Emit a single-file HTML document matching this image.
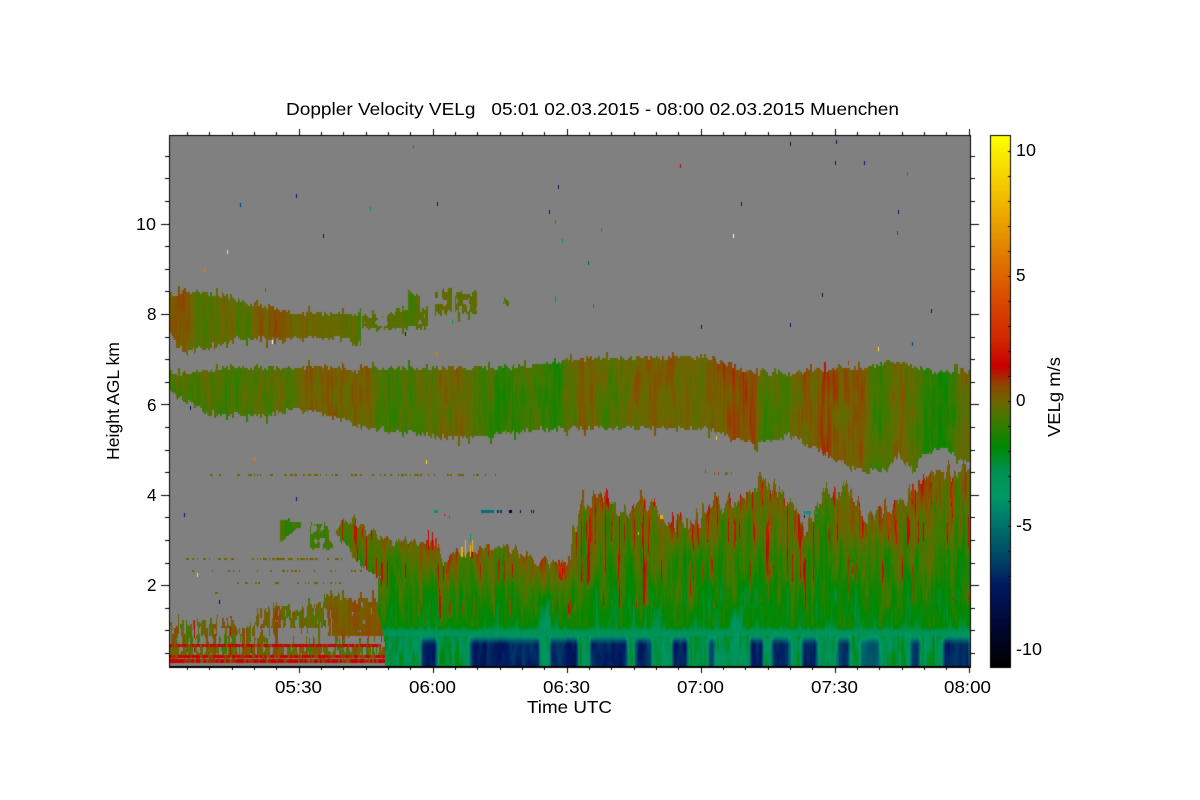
<!DOCTYPE html>
<html>
<head>
<meta charset="utf-8">
<title>Doppler Velocity VELg</title>
<style>
html,body{margin:0;padding:0;background:#fff;width:1200px;height:800px;overflow:hidden}
#c{position:absolute;left:0;top:0}
#t{position:absolute;left:0;top:0}
text{font-family:"Liberation Sans",sans-serif;font-size:17.5px;fill:#000;white-space:pre}
</style>
</head>
<body>
<canvas id="c" width="1200" height="800"></canvas>
<svg id="t" width="1200" height="800" xmlns="http://www.w3.org/2000/svg">
<text x="286" y="115" textLength="613" lengthAdjust="spacingAndGlyphs" xml:space="preserve">Doppler Velocity VELg   05:01 02.03.2015 - 08:00 02.03.2015 Muenchen</text>
<text x="136" y="230" textLength="20" lengthAdjust="spacingAndGlyphs">10</text>
<text x="147" y="320" textLength="9.5" lengthAdjust="spacingAndGlyphs">8</text>
<text x="147" y="411" textLength="9.5" lengthAdjust="spacingAndGlyphs">6</text>
<text x="147" y="501" textLength="9.5" lengthAdjust="spacingAndGlyphs">4</text>
<text x="147" y="591" textLength="9.5" lengthAdjust="spacingAndGlyphs">2</text>
<text x="275" y="693" textLength="47" lengthAdjust="spacingAndGlyphs">05:30</text>
<text x="409" y="693" textLength="47" lengthAdjust="spacingAndGlyphs">06:00</text>
<text x="543" y="693" textLength="47" lengthAdjust="spacingAndGlyphs">06:30</text>
<text x="677" y="693" textLength="47" lengthAdjust="spacingAndGlyphs">07:00</text>
<text x="811" y="693" textLength="47" lengthAdjust="spacingAndGlyphs">07:30</text>
<text x="944" y="693" textLength="47" lengthAdjust="spacingAndGlyphs">08:00</text>
<text x="527" y="713" textLength="85" lengthAdjust="spacingAndGlyphs">Time UTC</text>
<text transform="translate(119,460) rotate(-90)" textLength="118" lengthAdjust="spacingAndGlyphs">Height AGL km</text>
<text transform="translate(1060,437) rotate(-90)" textLength="80" lengthAdjust="spacingAndGlyphs">VELg m/s</text>
<text x="1016" y="156" textLength="20" lengthAdjust="spacingAndGlyphs">10</text>
<text x="1016" y="281" textLength="9.5" lengthAdjust="spacingAndGlyphs">5</text>
<text x="1016" y="406" textLength="9.5" lengthAdjust="spacingAndGlyphs">0</text>
<text x="1016" y="531" textLength="16" lengthAdjust="spacingAndGlyphs">-5</text>
<text x="1016" y="655" textLength="26" lengthAdjust="spacingAndGlyphs">-10</text>
</svg>
<script>
(function(){
var cv=document.getElementById('c'),g=cv.getContext('2d');
g.fillStyle='#fff';g.fillRect(0,0,1200,800);

// colour table: value -> rgb
var S=[[10.64,255,255,0],[8,240,184,0],[6,224,128,0],[4,216,72,0],[2.5,208,40,0],[1.4,200,0,0],[0.6,138,74,0],[0,110,102,0],[-0.8,60,122,0],[-1.8,0,136,0],[-2.8,0,144,80],[-3.8,0,153,102],[-5,0,112,106],[-6.4,0,64,102],[-7.4,0,24,96],[-8.8,0,8,56],[-10.64,0,0,0]];
function col(v){
  if(v>=S[0][0])return S[0];
  for(var i=1;i<S.length;i++){
    if(v>=S[i][0]){
      var a=S[i-1],b=S[i],t=(v-b[0])/(a[0]-b[0]);
      return [0,b[1]+(a[1]-b[1])*t,b[2]+(a[2]-b[2])*t,b[3]+(a[3]-b[3])*t];
    }
  }
  return [0,0,0,0];
}
function L(p,x){
  if(x<=p[0][0])return p[0][1];
  for(var i=1;i<p.length;i++){
    if(x<=p[i][0]){
      var a=p[i-1],b=p[i];
      return a[1]+(b[1]-a[1])*(x-a[0])/(b[0]-a[0]);
    }
  }
  return p[p.length-1][1];
}
function h(i,j){var s=Math.sin(i*127.1+j*311.7)*43758.5453;return s-Math.floor(s);}
function vn(x,y){
  var i=Math.floor(x),j=Math.floor(y),u=x-i,w=y-j;
  u=u*u*(3-2*u);w=w*w*(3-2*w);
  var a=h(i,j),b=h(i+1,j),c=h(i,j+1),d=h(i+1,j+1);
  return 2*(a+(b-a)*u+(c-a)*w+(a-b-c+d)*u*w)-1;
}
var At=[[169,292],[192,293],[218,293],[235,300],[265,305],[285,310],[298,313],[358,313],[360,313]];
var Ab=[[169,333],[178,347],[188,352],[198,348],[218,343],[238,338],[262,338],[282,340],[305,335],[318,338],[338,337],[355,343],[360,342]];
var Av=[[169,0.3],[185,0.2],[200,-0.5],[225,-0.05],[245,-0.6],[265,0.3],[285,0.3],[300,-0.05],[320,-0.05],[345,-0.2],[360,-0.5]];
var Bt=[[169,370],[185,375],[218,368],[252,367],[332,366],[358,370],[365,367],[490,367],[550,363],[573,358],[640,357],[690,357],[720,360],[740,367],[757,373],[787,373],[800,370],[867,367],[893,360],[933,370],[970,370]];
var Bb=[[169,392],[208,412],[265,415],[298,407],[322,413],[365,427],[398,430],[448,437],[490,435],[540,428],[607,427],[707,427],[730,437],[757,442],[790,433],[800,440],[833,457],[863,470],[887,468],[897,453],[910,467],[923,453],[943,447],[970,463]];
var Bv=[[169,-0.6],[230,-0.7],[295,-0.5],[305,0.2],[330,0.2],[350,0],[365,0.2],[380,-0.9],[420,-0.5],[460,-0.15],[500,-1.2],[530,-0.7],[555,-1.3],[570,-0.4],[590,0.25],[610,-0.7],[640,0.05],[660,0.2],[700,-0.3],[730,0.45],[750,0.45],[765,-0.9],[790,-0.3],[810,0.15],[825,0.5],[840,0.1],[860,0.25],[880,-1],[900,0.1],[925,-1.1],[940,-1.5],[970,0]];
var Mt=[[335,533],[350,518],[370,532],[387,540],[403,540],[437,547],[443,563],[457,553],[503,543],[523,553],[550,563],[570,560],[572,527],[583,500],[608,492],[627,510],[647,498],[660,513],[690,527],[710,503],[733,500],[753,487],[762,475],[783,495],[800,520],[807,533],[812,510],[820,490],[837,485],[850,487],[860,507],[863,517],[883,510],[900,503],[913,483],[940,467],[970,470]];
var Wb=[[335,533],[363,567],[380,577],[381,700]];
var Lc=[[169,623],[200,623],[210,620],[233,623],[240,633],[260,610],[277,602],[300,610],[320,603],[330,590],[340,597],[360,600],[377,600]];
var P=[[362,385,316,328],[385,395,312,326],[395,428,308,327],[408,420,293,320],[435,452,290,312],[455,477,292,312],[503,509,299,306]];
var D=[[421,437,.9],[470,540,1],[550,578,1],[590,627,1],[635,652,.85],[672,688,.9],[708,715,.7],[750,763,1],[772,790,.9],[802,817,1],[837,850,.8],[860,880,.6],[910,920,.8],[943,970,.95]];
function dark0(x){for(var i=0;i<D.length;i++)if(x>=D[i][0]&&x<D[i][1])return D[i][2];return 0;}
var darkT=[];
(function(){for(var x=160;x<980;x++){var s=0;for(var k=-2;k<=2;k++)s+=dark0(x+k);darkT[x]=s/5;}})();
function dark(x){return darkT[x]||0;}
function sm(a,b,x){var t=(x-a)/(b-a);t=t<0?0:t>1?1:t;return t*t*(3-2*t);}

// dotted olive rows
var R=[[473,210,495,.35],[557,175,345,.3],[570,190,370,.16],[581,225,345,.18],[592,190,340,.05]];

function val(x,yr){
  var y=yr,xq=Math.floor(x/1.5),xh=Math.floor(x/2);
  var c=h(xq,3)*2-1,jt=(h(xh,11)-.5)*6,jb=(h(xh,13)-.5)*6;
  if(h(xh,17)<.08)jt-=5; if(h(xh,19)<.07)jb+=6;
  // cirrus A
  if(x<=360&&y>=L(At,x)+jt&&y<=L(Ab,x)+jb){
    return L(Av,x)+.4*vn(x/2.5,y/25)+.2*c;
  }
  // small patches
  for(var i=0;i<P.length;i++){
    var q=P[i];
    if(x>=q[0]&&x<q[1]&&y>=q[2]+jt&&y<=q[3]+jb&&vn(x/4,y/7)>-.5)return -0.4+.35*vn(x/2,y/20)+.2*c;
  }
  // band B
  if(y>=L(Bt,x)+jt*.9&&y<=L(Bb,x)+jb){
    var tr=1-(y-L(Bt,x))/40; tr=tr<0?0:tr;
    return L(Bv,x)+.15*tr+.4*vn(x/2,y/30)+.18*c+.3*vn(x/5,y/18);
  }
  var n1=vn(x/4,y/35),n2=vn(x/1.5+50,y/18);
  // small clouds and rows
  if(x>=280&&x<=300&&y>518+jt*.7+Math.abs(x-283)*.2&&y<541+jb*.5-(x-280)*.8&&h(xh,23)>.1)return -.8+.4*c;
  if(x>=310&&x<=332&&y>=525+jt*1.3&&y<=548+jb&&vn(x/3,y/6)>-.3)return -.7+.4*c;
  for(i=0;i<R.length;i++){
    var r=R[i];
    if(y>=r[0]&&y<r[0]+2&&x>=r[1]&&x<=r[2]){
      var pr=r[3]; if(r[0]==557&&x>255&&x<305)pr=.75;
      if(h(Math.floor(x/1.5),r[0])<pr)return .05+.2*c;
    }
  }
  // main mass
  if(x>=335){
    var tp=L(Mt,x),amp=x>570?13:7,jm=(h(xh,29)-.5)*amp+vn(x/3,9)*amp*.8;
    var lb=(x<385)?L(Wb,x)+jb:700;
    if(x>=378&&x<385&&y>=577)lb=(y>=600)?(x>=376+(y-600)*.2?700:0):700;
    if(y>=tp+jm&&y<=lb&&y<=667){
      var t=(y-tp)/(632-tp);t=t<0?0:t>1?1:t;
      var base=.15-2.2*Math.pow(t,.85);
      var v=base+.8*n1+.5*n2+.2*c;
      var s=vn(x/1.6+9,y/38),rf=x>570?.46:.62;
      if(s>rf&&t<.8)v+=2.2*sm(rf,.82,s);
      if(y>580)v-=1.3*Math.exp(-(x-545)*(x-545)/30)*sm(580,610,y);
      if(y>590)v-=1.0*Math.exp(-(x-735)*(x-735)/40)*sm(590,620,y);
      if(y>=624)v+=(-3.1-v)*sm(624,632,y);
      if(y>=632&&x>=378+(y-632)*.3){
        var d=dark(x),nn=vn(x/2.5,y/14),m=vn(x/4+40,y/40);
        if(y<636){return -3.2+.35*nn+.2*c;}
        v=-2.7+.9*nn+.3*c;
        if(d>0)v=v+(-3.4+.3*nn-(.95+.15*m)*sm(632,645,y)*(4+.7*nn)-v)*Math.min(1,d*1.1);
        return v;
      }
      return v;
    }
  }
  // lower-left clutter
  if(x<385){
    if(y>=663)return null;
    if((y>=644&&y<647)||(y>=655&&y<658)||(y>=659&&y<663)){
      var u=h(Math.floor(x/2),y>650?(y>=659?3:2):1);
      if(x>380&&y<655)return null;
      return u<.6?1.45:u<.82?0.9:0.45;
    }
    if(y>=658&&y<659)return h(x,41)<.35?.5:null;
    var ct=L(Lc,x)+jt*1.4;
    if(y>=ct){
      var dense;
      if(x>=328)dense=y<636?-.75:.35;
      else if(x>=255)dense=y<628?-.25:.3;
      else dense=y<ct+20?-.2:.1;
      if(y>=647)dense=-.35;
      if(vn(x/1.6,y/9)+.3*c>dense){
        var v2=.15+.55*vn(x/5,y/22)-.7*(vn(x/3+70,y/20)>.3?1.2:0)+.3*c;
        if(x>=328&&y<640)v2=.3+.4*vn(x/6,y/22)+.2*c;
        if(h(xq,31)<.04)v2=1.3;
        return v2;
      }
    }
  }
  return null;
}

var ix=170,iy=136,W=800,H=530;
var img=g.createImageData(W,H),dt=img.data;
for(var py=0;py<H;py++){
  var yy=iy+py,yq=iy+Math.floor(py/2)*2;
  if(yy>=644&&yy<=663)yq=yy;
  for(var px=0;px<W;px++){
    var x=ix+px,v=val(x,yq),o=(py*W+px)*4,cc;
    if(v===null){dt[o]=dt[o+1]=dt[o+2]=128;}
    else{cc=col(v);dt[o]=cc[1];dt[o+1]=cc[2];dt[o+2]=cc[3];}
    dt[o+3]=255;
  }
}
g.putImageData(img,ix,iy);

// speckles
var sp=[[240,203,'#003c78'],[296,194,'#001a5c'],[323,234,'#001a5c'],[370,207,'#00a040'],[437,202,'#001a5c'],[227,250,'#ffe840'],[204,268,'#e08000'],[265,288,'#4a7800'],[413,145,'#6a7000'],[558,185,'#001a5c'],[549,210,'#001a5c'],[555,220,'#6a7000'],[562,239,'#00a040'],[601,228,'#6a7000'],[588,261,'#006a66'],[593,304,'#4a7800'],[680,164,'#c80000'],[790,142,'#001a5c'],[836,140,'#001a5c'],[835,161,'#001a5c'],[864,161,'#001a5c'],[907,172,'#6a7000'],[741,202,'#001a5c'],[733,234,'#ffffff'],[898,210,'#001a5c'],[897,231,'#c82000'],[822,293,'#001a5c'],[790,323,'#001a5c'],[701,325,'#001a5c'],[931,309,'#001a5c'],[912,342,'#003c78'],[878,347,'#ffe000'],[848,361,'#c03000'],[405,332,'#001a5c'],[452,320,'#009966'],[436,352,'#e08000'],[190,406,'#001a5c'],[272,340,'#ffffff'],[254,457,'#e08000'],[426,460,'#ffe000'],[296,497,'#001a5c'],[184,513,'#001a5c'],[197,573,'#ffe040'],[219,600,'#000050'],[555,296,'#00a040'],[555,299,'#00a040'],[716,436,'#ffd000'],[648,365,'#c03000']];
sp.forEach(function(s){g.fillStyle=s[2];g.fillRect(s[0],s[1],1,4);});
// echoes near 3.5 km
function rc(c,x,y,w,h2){g.fillStyle=c;g.fillRect(x,y,w,h2);}
rc('#00707a',481,510,13,3);rc('#003c78',497,510,2,3);rc('#003c78',500,510,2,3);rc('#000030',509,510,3,3);rc('#001a5c',520,510,1,3);rc('#001a5c',531,510,1,3);rc('#001a5c',533,510,1,3);rc('#009966',434,510,4,3);
rc('#c81800',444,514,1,2);rc('#6a7000',449,515,1,3);
rc('#c80000',428,530,1,20);rc('#c80000',432,532,1,18);rc('#c83000',435,538,2,12);
rc('#f0b000',461,547,2,10);rc('#f0b000',465,540,1,17);rc('#f0c000',470,545,1,12);rc('#f0b000',472,540,1,14);rc('#c80000',471,552,2,6);rc('#009966',470,534,1,8);
rc('#f0b000',660,515,3,4);rc('#f0c000',638,532,1,3);
rc('#009966',806,511,5,3);rc('#00707a',804,511,1,3);rc('#001a5c',804,515,1,3);rc('#009966',815,511,3,3);
rc('#6a7000',705,469,1,4);rc('#7a6000',714,472,1,3);rc('#6a7000',725,472,3,3);rc('#c03000',718,472,1,3);rc('#00a040',731,472,1,3);

// colour bar
for(var yy2=135;yy2<668;yy2++){
  var cc2=col((401-yy2)/25);
  g.fillStyle='rgb('+Math.round(cc2[1])+','+Math.round(cc2[2])+','+Math.round(cc2[3])+')';
  g.fillRect(990,yy2,21,1);
}
g.fillStyle='#000';
g.fillRect(990,135,21,1);g.fillRect(990,135,1,533);g.fillRect(1010,135,1,533);g.fillRect(990,667,21,1);
for(var v3=-10;v3<=10;v3++){g.fillRect(1008,Math.round(401-25*v3),2,1);}

// axes
g.fillRect(169,135,802,1);g.fillRect(169,135,1,533);g.fillRect(970,135,1,533);g.fillRect(169,666,802,2);
var i2,tx,ty,mj;
for(i2=0;i2<36;i2++){
  tx=Math.round(187+i2*22.33);
  mj=(i2-5)%6===0&&i2>=5;
  if(tx>970)break;
  g.fillRect(tx,mj?129:132,1,mj?6:3);
  g.fillRect(tx,668,1,mj?5:2);
}
for(i2=0;i2<24;i2++){
  ty=Math.round(653-i2*22.6);
  if(ty<=136)break;
  mj=(i2-3)%4===0&&i2>=3;
  g.fillRect(mj?161:165,ty,mj?8:4,1);
  g.fillRect(971,ty,mj?8:4,1);
}
})();
</script>
</body>
</html>
